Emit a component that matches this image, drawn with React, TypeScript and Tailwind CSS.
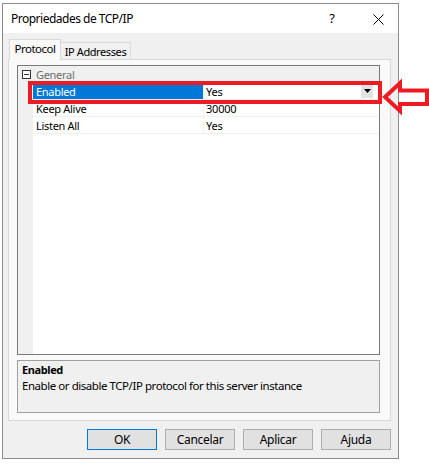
import React from "react";

const font = { fontFamily: '"Noto Sans", "Open Sans", sans-serif' };

function Row({
  label,
  value,
  selected,
  dropdown,
}: {
  label: string;
  value: string;
  selected?: boolean;
  dropdown?: boolean;
}) {
  return (
    <div className="flex h-[17px] border-b border-[#f0f0f0]">
      <div className="w-[15px] shrink-0 bg-[#f0f0f0]" />
      <div
        className={`w-[171px] shrink-0 pl-[3px] flex items-center text-[11px] leading-none tracking-[-0.3px] whitespace-nowrap border-r border-[#f0f0f0] ${
          selected ? "bg-[#0078d7] text-white" : "text-black"
        }`}
      >
        {label}
      </div>
      <div className="flex-1 flex items-center pl-[2px] text-[11px] leading-none tracking-[-0.2px] text-black bg-white relative">
        {value}
        {dropdown && (
          <div className="absolute right-[6px] top-[1px] w-[12px] h-[14px] bg-[#e3e3e3] flex items-center justify-center">
            <svg width="7" height="4" viewBox="0 0 7 4">
              <path d="M0 0 L7 0 L3.5 4 Z" fill="#000" />
            </svg>
          </div>
        )}
      </div>
    </div>
  );
}

export default function App() {
  return (
    <div className="relative w-[429px] h-[466px] bg-white overflow-hidden" style={font}>
      <div className="ml-[2px] mt-[3px] w-[397px] h-[456px] border border-[#8c8c8c] flex flex-col">
        {/* title bar */}
        <div className="h-[29px] bg-white flex items-center pl-[8px] shrink-0">
          <span className="text-[12px] text-black tracking-[-0.5px] mt-[1px] whitespace-nowrap">Propriedades de TCP/IP</span>
          <span className="ml-auto text-[13px] text-black mr-[38px] mt-[1px]">?</span>
          <svg width="11" height="11" viewBox="0 0 11 11" className="mr-[14px] mt-[1px]">
            <path d="M0.5 0.5 L10.5 10.5 M10.5 0.5 L0.5 10.5" stroke="#000" strokeWidth="1" />
          </svg>
        </div>
        {/* body */}
        <div className="flex-1 bg-[#f0f0f0] flex flex-col">
          <div className="pl-[6px] pt-[7px] flex items-end h-[27px]">
            <div className="relative z-10 h-[21px] w-[52px] bg-[#f9f9f9] border border-b-0 border-[#d9d9d9] flex items-start justify-center pt-[2px] text-[11.5px] leading-[14px] tracking-[-0.5px] whitespace-nowrap text-black">
              Protocol
            </div>
            <div className="h-[18px] w-[70px] bg-[#f0f0f0] border border-l-0 border-b-0 border-[#d9d9d9] flex items-center justify-center text-[11px] leading-none tracking-[-0.4px] whitespace-nowrap text-black">
              IP Addresses
            </div>
          </div>
          <div className="ml-[5px] -mt-[1px] w-[383px] h-[362px] border border-[#d9d9d9] bg-[#f9f9f9] pl-[8px] pt-[5px]">
            {/* property grid */}
            <div className="w-[363px] h-[290px] border border-[#7a7a7a] bg-white flex flex-col">
              <div className="flex h-[17px] bg-[#f0f0f0] items-center">
                <div className="w-[15px] shrink-0 flex items-center justify-center">
                  <div className="w-[9px] h-[9px] border border-[#333] bg-white flex items-center justify-center ml-[2px]">
                    <div className="w-[5px] h-[1px] bg-[#333]" />
                  </div>
                </div>
                <div className="pl-[3px] text-[11px] leading-none tracking-[-0.3px] text-[#6d6d6d]">General</div>
              </div>
              <Row label="Enabled" value="Yes" selected dropdown />
              <Row label="Keep Alive" value="30000" />
              <Row label="Listen All" value="Yes" />
              <div className="flex flex-1">
                <div className="w-[15px] shrink-0 bg-[#f0f0f0]" />
                <div className="flex-1 bg-white" />
              </div>
            </div>
            {/* description */}
            <div className="mt-[5px] w-[363px] h-[53px] border border-[#a0a0a0] bg-[#f0f0f0] pl-[4px] pt-[2px]">
              <div className="text-[11px] font-bold leading-[14px] tracking-[-0.4px] text-black">Enabled</div>
              <div className="text-[11.5px] leading-[14px] mt-[2px] tracking-[-0.45px] whitespace-nowrap text-black">
                Enable or disable TCP/IP protocol for this server instance
              </div>
            </div>
          </div>
          {/* buttons */}
          <div className="flex justify-end gap-[8px] pr-[7px] mt-[8px]">
            <button className="w-[70px] h-[21px] bg-[#e1e1e1] border border-[#0078d7] text-[12px] leading-none tracking-[-0.3px] text-black">OK</button>
            <button className="w-[70px] h-[21px] bg-[#e1e1e1] border border-[#adadad] text-[12px] leading-none tracking-[-0.3px] text-black">Cancelar</button>
            <button className="w-[70px] h-[21px] bg-[#e1e1e1] border border-[#adadad] text-[12px] leading-none tracking-[-0.3px] text-black">Aplicar</button>
            <button className="w-[70px] h-[21px] bg-[#e1e1e1] border border-[#adadad] text-[12px] leading-none tracking-[-0.3px] text-black">Ajuda</button>
          </div>
        </div>
      </div>
      {/* annotation */}
      <div className="absolute left-[28px] top-[81px] w-[354px] h-[23px] border-4 border-[#ed1c24]" />
      <svg className="absolute left-0 top-0" width="429" height="466" viewBox="0 0 429 466">
        <polygon
          points="385,97 400,83 400,90.5 427,90.5 427,104 400,104 400,111"
          fill="none"
          stroke="#ed1c24"
          strokeWidth="4"
          strokeLinejoin="miter"
        />
      </svg>
    </div>
  );
}
